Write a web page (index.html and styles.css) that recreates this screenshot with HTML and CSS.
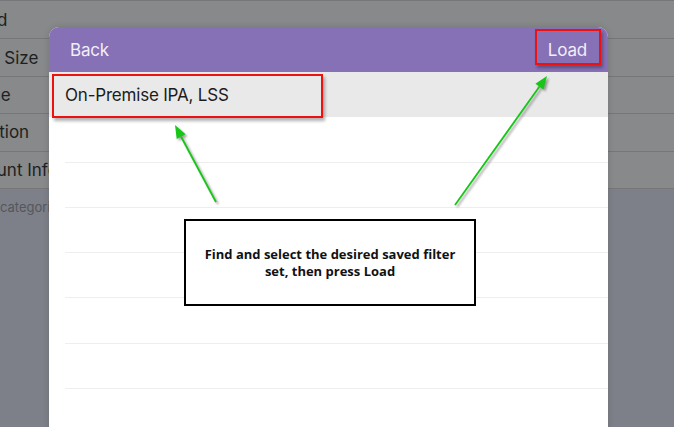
FILE: index.html
```html
<!DOCTYPE html>
<html>
<head>
<meta charset="utf-8">
<link rel="stylesheet" href="styles.css">
</head>
<body>
<div class="screen">
  <ul class="settings">
    <li class="setting"><span class="setting-label">Brand</span></li>
    <li class="setting"><span class="setting-label">Pack Size</span></li>
    <li class="setting"><span class="setting-label">Range</span></li>
    <li class="setting"><span class="setting-label">Location</span></li>
    <li class="setting"><span class="setting-label">Amount Info</span></li>
  </ul>
  <p class="settings-note">Select categories</p>

  <div class="modal">
    <header class="modal-bar">
      <button class="bar-btn">Back</button>
      <button class="bar-btn">Load</button>
    </header>
    <ul class="filter-list">
      <li class="filter-row is-selected">On-Premise IPA, LSS</li>
      <li class="filter-row"></li>
      <li class="filter-row"></li>
      <li class="filter-row"></li>
      <li class="filter-row"></li>
      <li class="filter-row"></li>
      <li class="filter-row"></li>
      <li class="filter-row"></li>
    </ul>
  </div>

  <div class="callout callout-row"></div>
  <div class="callout callout-load"></div>

  <svg class="arrows" width="674" height="427" viewBox="0 0 674 427">
    <g class="arrow">
      <line x1="216" y1="202" x2="181" y2="136.5"/>
      <polygon points="175,125 185.5,134.2 176.7,138.9"/>
    </g>
    <g class="arrow">
      <line x1="455" y1="205" x2="539.5" y2="86.6"/>
      <polygon points="547,76 543.5,89.5 535.4,83.7"/>
    </g>
  </svg>

  <div class="tip">Find and select the desired saved filter set, then press Load</div>
</div>
</body>
</html>
```
FILE: styles.css
```css
* { box-sizing: border-box; }
html, body { margin: 0; padding: 0; }
body { width: 674px; height: 427px; overflow: hidden; }

.screen {
  position: relative;
  width: 674px;
  height: 427px;
  overflow: hidden;
  background: #7d8088;
  font-family: Inter, "Liberation Sans", sans-serif;
}

.settings {
  list-style: none;
  margin: 0;
  padding: 0;
  border-top: 1.4px solid #747677;
  padding-top: 1px;
  background: #87898a;
}
.setting {
  height: 37.4px;
  background: #87898a;
  border-bottom: 1.4px solid #747677;
  display: flex;
  align-items: center;
  font-size: 17px;
  color: #1e1f1f;
}
.setting-label { margin-left: -40px; white-space: nowrap; }

.settings-note {
  margin: 10px 0 0 -42px;
  font-size: 13px;
  color: #55575c;
  white-space: nowrap;
}

.modal {
  position: absolute;
  left: 49px;
  top: 27px;
  width: 559px;
  height: 420px;
  background: #ffffff;
  border-radius: 10px 10px 0 0;
  overflow: hidden;
  box-shadow: 0 0 6px rgba(0,0,0,0.15);
}
.modal-bar {
  height: 45px;
  background: #8670b6;
  display: flex;
  justify-content: space-between;
  align-items: center;
  padding: 0 21px;
}
.bar-btn {
  border: 0;
  background: none;
  padding: 0;
  font-family: Inter, "Liberation Sans", sans-serif;
  font-size: 17px;
  color: #f2eef8;
  letter-spacing: -0.2px;
}
.filter-list { list-style: none; margin: 0; padding: 0; }
.filter-row {
  position: relative;
  height: 45.3px;
  display: flex;
  align-items: center;
  padding-left: 16px;
  font-size: 17px;
  color: #1c1c1c;
  letter-spacing: -0.2px;
}
.filter-row::after {
  content: "";
  position: absolute;
  left: 16px;
  right: 0;
  bottom: 0;
  height: 1px;
  background: #eeeeee;
}
.filter-row.is-selected { background: #e9e9e9; }
.filter-row.is-selected::after { display: none; }

.callout {
  position: absolute;
  border: 2px solid #ee1111;
  box-shadow: 2px 3px 3px rgba(0,0,0,0.3);
}
.callout-row { left: 52px; top: 74px; width: 271px; height: 44px; }
.callout-load { left: 535px; top: 29px; width: 66px; height: 36px; }

.arrows { position: absolute; left: 0; top: 0; }
.arrow { filter: drop-shadow(2px 2px 1px rgba(0,0,0,0.35)); }
.arrow line { stroke: #17c617; stroke-width: 1.8; }
.arrow polygon { fill: #17c617; }

.tip {
  position: absolute;
  left: 184px;
  top: 219px;
  width: 292px;
  height: 87px;
  border: 2px solid #000;
  background: #fff;
  display: flex;
  align-items: center;
  justify-content: center;
  text-align: center;
  padding: 0 10px;
  font-family: "Open Sans", "Noto Sans", sans-serif;
  font-weight: 700;
  font-size: 13px;
  line-height: 17px;
  color: #111;
}
```
